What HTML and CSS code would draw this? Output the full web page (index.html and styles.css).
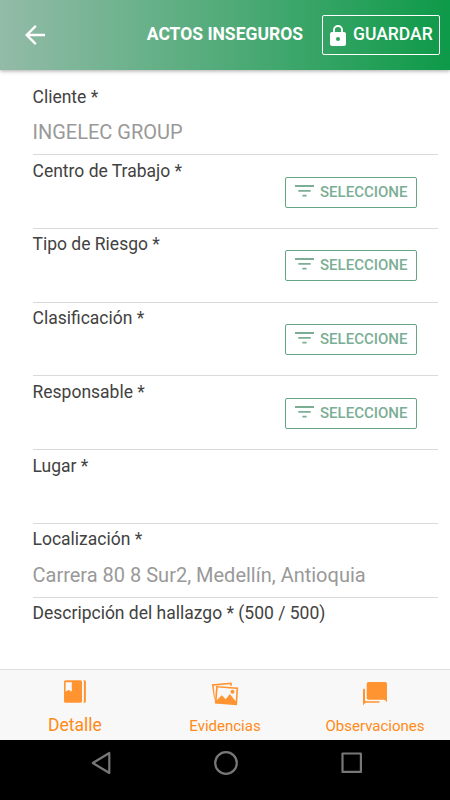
FILE: index.html
```html
<!DOCTYPE html>
<html lang="es">
<head>
    <meta charset="UTF-8">
    <meta name="viewport" content="width=device-width, initial-scale=1.0">
    <title>Actos Inseguros</title>
    <link rel="stylesheet" href="styles.css">
</head>
<body>

<svg class="symbols" width="0" height="0">
    <symbol id="filter" viewBox="0 0 19 12">
        <path d="M0 0h19v1.9H0zM3.3 4.9h12.4v1.9H3.3zM7.4 9.8h4.2v1.8H7.4z"/>
    </symbol>
</svg>

<div class="app">
    <header class="header">
        <button class="back-btn" aria-label="Volver">
            <svg width="20" height="20" viewBox="0 0 20 20">
                <path d="M20 8.8H4.6l7-7L10 0 0 10l10 10 1.6-1.8-7-7H20z"/>
            </svg>
        </button>
        <h1>ACTOS INSEGUROS</h1>
        <button class="save-btn">
            <svg width="16" height="21" viewBox="0 0 16 21">
                <path fill-rule="evenodd" d="M14 7h-1V5A5 5 0 0 0 3 5v2H2a2 2 0 0 0-2 2v10a2 2 0 0 0 2 2h12a2 2 0 0 0 2-2V9a2 2 0 0 0-2-2zM8 16a2 2 0 1 1 0-4 2 2 0 0 1 0 4zM11.1 7H4.9V5a3.1 3.1 0 0 1 6.2 0z"/>
            </svg>
            <span>GUARDAR</span>
        </button>
    </header>

    <main class="form">
        <div class="item">
            <label>Cliente *</label>
            <div class="value">INGELEC GROUP</div>
        </div>
        <div class="item">
            <label>Centro de Trabajo *</label>
            <button class="select-btn"><svg width="19" height="12"><use href="#filter"/></svg><span>SELECCIONE</span></button>
        </div>
        <div class="item">
            <label>Tipo de Riesgo *</label>
            <button class="select-btn"><svg width="19" height="12"><use href="#filter"/></svg><span>SELECCIONE</span></button>
        </div>
        <div class="item">
            <label>Clasificación *</label>
            <button class="select-btn"><svg width="19" height="12"><use href="#filter"/></svg><span>SELECCIONE</span></button>
        </div>
        <div class="item">
            <label>Responsable *</label>
            <button class="select-btn"><svg width="19" height="12"><use href="#filter"/></svg><span>SELECCIONE</span></button>
        </div>
        <div class="item">
            <label>Lugar *</label>
        </div>
        <div class="item">
            <label>Localización *</label>
            <div class="value">Carrera 80 8 Sur2, Medellín, Antioquia</div>
        </div>
        <div class="item last">
            <label>Descripción del hallazgo * (500 / 500)</label>
        </div>
    </main>

    <nav class="tabs">
        <a class="tab active">
            <svg width="24" height="24" viewBox="0 0 24 24">
                <path fill-rule="evenodd" d="M2.5.3h15A1.5 1.5 0 0 1 19 1.8v19.4a1.5 1.5 0 0 1-1.5 1.5h-15A1.5 1.5 0 0 1 1 21.2V1.8A1.5 1.5 0 0 1 2.5.3zM2.6 2.3v9.2l3.1-1.6 3.1 1.6V2.3z"/>
                <path d="M20.2.3h1.2a1.5 1.5 0 0 1 1.5 1.5v19.4a1.5 1.5 0 0 1-1.5 1.5h-1.2q.7-.7.7-1.5V1.8q0-.8-.7-1.5z"/>
            </svg>
            <span>Detalle</span>
        </a>
        <a class="tab">
            <svg width="28" height="24" viewBox="0 0 28 24">
                <path d="M.8 2.2 20.6.5l.4 3.3-1.7-.1-.2-1.5L2.7 3.8l1.1 11.3-.3 4z"/>
                <path fill-rule="evenodd" d="M5.1 3.9 27.2 5.6 26 23.3 3.8 21.6zM6.7 5.6 5.7 18.3l5.1-5 4 4 4-5.3 5.9 7.2.8-12.1z"/>
                <circle cx="21.5" cy="9.8" r="2"/>
            </svg>
            <span>Evidencias</span>
        </a>
        <a class="tab">
            <svg width="26" height="24" viewBox="0 0 26 24">
                <path d="M6.4 0h17A1.7 1.7 0 0 1 25 1.7V20.3q-1.2-2.4-3.4-2.6H6.4a1.7 1.7 0 0 1-1.7-1.7V1.7A1.7 1.7 0 0 1 6.4 0z"/>
                <path d="M1 8q0-1.4 2-1.6v11.7q0 1.2 1.4 1.2h13.5q-.2 1.5-1.5 1.5H4.4Q2.2 21 1 23.5z"/>
            </svg>
            <span>Observaciones</span>
        </a>
    </nav>

    <footer class="system-bar">
        <svg width="20" height="24" viewBox="0 0 20 24"><path d="M18.3 2v20L1.8 12z"/></svg>
        <svg width="24" height="24" viewBox="0 0 24 24"><circle cx="12" cy="12" r="10.8"/></svg>
        <svg width="22" height="24" viewBox="0 0 22 24"><path d="M1.5 2.5h18.4v18.4H1.5z"/></svg>
    </footer>
</div>

</body>
</html>
```
FILE: styles.css
```css
* {
    box-sizing: border-box;
}

body {
    margin: 0;
    font-family: Roboto, sans-serif;
    background-color: #fff;
}

button {
    font-family: inherit;
    background: none;
    cursor: pointer;
}

.symbols {
    display: block;
}

.app {
    display: flex;
    flex-direction: column;
    height: 800px;
}

/* top bar */
.header {
    display: flex;
    align-items: center;
    height: 70px;
    padding: 0 10px 0 25px;
    background: linear-gradient(to right, #93bba8, #51ab79 50%, #0d9a48);
    box-shadow: 0 1px 4px rgba(0, 0, 0, 0.35);
    color: #fff;
    fill: #fff;
}

.back-btn {
    display: flex;
    padding: 0;
    border: none;
    fill: #fff;
}

.header h1 {
    margin: 0 19px 0 auto;
    padding-bottom: 2px;
    font-size: 17.5px;
    font-weight: 700;
    line-height: 20px;
    white-space: nowrap;
}

.save-btn {
    display: flex;
    align-items: center;
    gap: 7px;
    width: 118px;
    height: 40px;
    padding: 0 0 0 7px;
    border: 1px solid #fff;
    border-radius: 2px;
    color: #fff;
    fill: #fff;
    font-size: 17.5px;
    font-weight: 500;
}

.save-btn span {
    padding-bottom: 2px;
}

/* form rows */
.form {
    flex: 1;
    padding: 11.4px 12.5px 0 32.5px;
}

.item {
    display: flex;
    flex-direction: column;
    height: 73.75px;
    padding-top: 5.5px;
    border-bottom: 1px solid #dadada;
}

.item.last {
    height: auto;
    border-bottom: none;
}

.item label {
    color: #424242;
    font-size: 17.5px;
    line-height: 20px;
}

.value {
    margin-top: 13.2px;
    color: #999;
    font-size: 20px;
    line-height: 24px;
}

.select-btn {
    display: flex;
    align-items: flex-start;
    align-self: flex-end;
    gap: 6px;
    width: 132px;
    height: 31px;
    margin: -4px 20.5px 0 0;
    padding: 7px 0 0 9px;
    border: 1px solid #64a584;
    border-radius: 2px;
    color: #7bae95;
    fill: #7bae95;
    font-size: 15px;
    font-weight: 500;
    line-height: 14px;
}

/* bottom tabs */
.tabs {
    display: flex;
    height: 71px;
    background-color: #f8f8f8;
    border-top: 1px solid #dedede;
}

.tab {
    display: flex;
    flex: 1;
    flex-direction: column;
    align-items: center;
    gap: 10px;
    padding-top: 12px;
    color: #ff8a17;
    fill: #ff9430;
    font-size: 15px;
    line-height: 20px;
}

.tab.active {
    gap: 11px;
    padding-top: 10px;
    font-size: 17.5px;
}

/* android navigation */
.system-bar {
    display: flex;
    align-items: center;
    justify-content: space-between;
    height: 60px;
    padding: 0 87px 14px 91px;
    background-color: #000;
    fill: none;
    stroke: #777;
    stroke-width: 2.2;
    stroke-linejoin: round;
}
```
